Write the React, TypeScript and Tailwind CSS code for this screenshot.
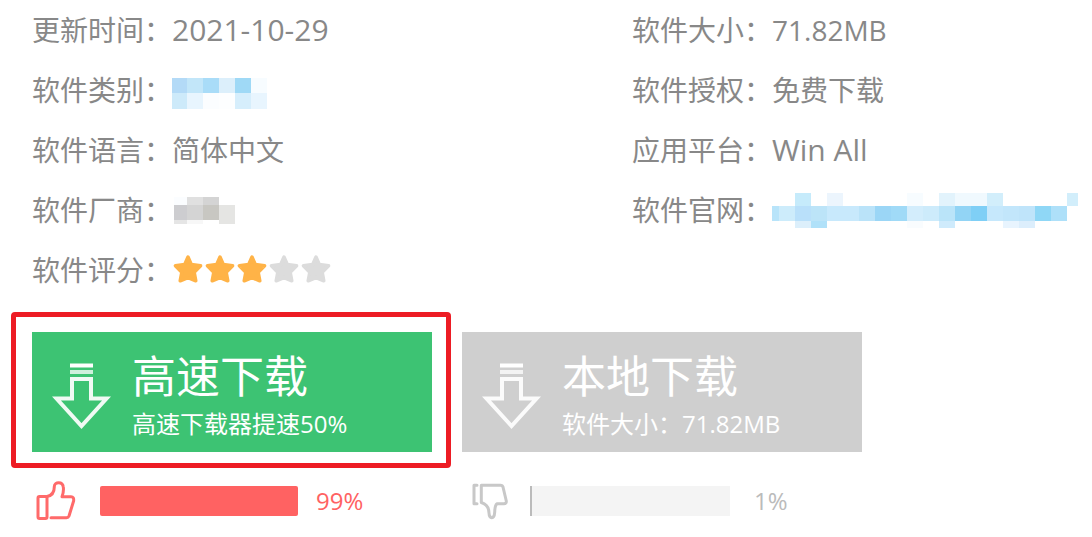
import type { ReactNode } from "react";

// x, y, width, height, fill
type Cell = [number, number, number, number, string];

const categoryCells: Cell[] = [
  [0, 0, 15, 15, "#b3daf7"],
  [15, 0, 16, 15, "#c2e6f9"],
  [31, 0, 16, 15, "#a9dcf8"],
  [47, 0, 16, 15, "#dceffb"],
  [63, 0, 16, 15, "#9fd9f6"],
  [79, 0, 16, 15, "#f7fcff"],
  [0, 15, 15, 16, "#cdeafa"],
  [15, 15, 16, 16, "#e8f5fe"],
  [31, 15, 16, 16, "#fbfdff"],
  [47, 15, 16, 16, "#fdfeff"],
  [63, 15, 16, 16, "#d6eefc"],
  [79, 15, 16, 16, "#e8f5fe"],
];

const vendorCells: Cell[] = [
  [2, 0, 13, 8, "#fbfdff"],
  [15, 0, 16, 8, "#e0e0e0"],
  [31, 0, 16, 8, "#d4d4d4"],
  [2, 8, 13, 15, "#cdcdd0"],
  [15, 8, 16, 15, "#d4d4d4"],
  [31, 8, 16, 15, "#c8c7c2"],
  [47, 8, 16, 19, "#e5e5e3"],
  [2, 23, 13, 4, "#e5e5e5"],
  [15, 23, 16, 4, "#f7f7f7"],
];

const siteCells: Cell[] = [
  [23, 0, 16, 13, "#c6ebfb"],
  [55, 0, 16, 13, "#ecf5fd"],
  [135, 0, 16, 13, "#f7fcff"],
  [167, 0, 16, 13, "#e2f3fc"],
  [183, 0, 32, 13, "#f0f9fe"],
  [215, 0, 16, 13, "#d2eefb"],
  [295, 0, 11, 13, "#d2eefb"],
  [0, 13, 7, 15, "#b8e4fa"],
  [7, 13, 16, 15, "#cdecfb"],
  [23, 13, 16, 15, "#b9e0fa"],
  [39, 13, 16, 15, "#bce4f8"],
  [55, 13, 32, 15, "#c8e9fc"],
  [87, 13, 16, 15, "#bae3f9"],
  [103, 13, 16, 15, "#9bd6f6"],
  [119, 13, 16, 15, "#a0daf7"],
  [135, 13, 16, 15, "#d3edfc"],
  [151, 13, 16, 15, "#cdebfb"],
  [167, 13, 16, 15, "#bae4f9"],
  [183, 13, 16, 15, "#92d4f5"],
  [199, 13, 16, 15, "#7fcff6"],
  [215, 13, 16, 15, "#c6e8fc"],
  [231, 13, 16, 15, "#c2e6fb"],
  [247, 13, 16, 15, "#bfe4fa"],
  [263, 13, 16, 15, "#8fd7f6"],
  [279, 13, 16, 15, "#aee0f9"],
  [23, 28, 16, 7, "#dceffb"],
  [39, 28, 16, 7, "#b0e1f9"],
  [135, 28, 16, 7, "#f9fcfe"],
  [167, 28, 16, 7, "#cfebfc"],
  [231, 28, 16, 7, "#e8f4fe"],
  [247, 28, 16, 7, "#dceefc"],
];

const Mosaic = ({
  cells,
  width,
  height,
}: {
  cells: Cell[];
  width: number;
  height: number;
}) => (
  <svg
    width={width}
    height={height}
    viewBox={`0 0 ${width} ${height}`}
    shapeRendering="crispEdges"
    aria-hidden="true"
  >
    {cells.map(([x, y, w, h, fill]) => (
      <rect key={`${x}-${y}`} x={x} y={y} width={w} height={h} fill={fill} />
    ))}
  </svg>
);

const Star = ({ active }: { active: boolean }) => (
  <svg width="32" height="32" viewBox="0 0 32 32" aria-hidden="true">
    <path
      d="M16 3 19.4 10.6 28.6 11.8 22.2 18.2 23.8 26.8 16 23.6 8.2 26.8 9.8 18.2 3.4 11.8 12.6 10.6Z"
      fill={active ? "#ffb347" : "#dcdcdc"}
      stroke={active ? "#ffb347" : "#dcdcdc"}
      strokeWidth="3.5"
      strokeLinejoin="round"
    />
  </svg>
);

const DownloadArrow = () => (
  <svg
    width="60"
    height="70"
    viewBox="0 0 60 70"
    fill="none"
    stroke="#fff"
    className="shrink-0"
    aria-hidden="true"
  >
    <path d="M18 4.5H41" strokeWidth="4" />
    <path d="M18 11H41" strokeWidth="4" strokeOpacity="0.75" />
    <path
      d="M20 18H39V37.5H54.5L29.5 65 4.5 37.5H20Z"
      strokeWidth="4"
      strokeOpacity="0.92"
    />
  </svg>
);

const ThumbUp = () => (
  <svg
    width="40"
    height="40"
    viewBox="0 0 40 40"
    fill="none"
    stroke="#ff6a6a"
    strokeWidth="3"
    strokeLinecap="round"
    strokeLinejoin="round"
    aria-hidden="true"
  >
    <rect x="2" y="15.5" width="9" height="22" rx="1.5" />
    <path d="M15 36.7H30.5Q32.3 36.7 33 35L37.6 20Q38.2 15.7 35 15.7H26Q28 10 27.3 6C26.7 .2 18.5 .6 18.3 5.5C18.4 10.5 16.5 14.5 11 15.5" />
  </svg>
);

const ThumbDown = () => (
  <svg
    width="38"
    height="40"
    viewBox="0 0 38 40"
    fill="none"
    stroke="#c8c8c8"
    strokeWidth="3"
    strokeLinecap="round"
    strokeLinejoin="round"
    aria-hidden="true"
  >
    <path d="M5 4.2H2V22.7H5" />
    <path d="M9.3 4.2H28.5Q30.5 4.2 31 6L34.3 20Q34.5 22.7 32 22.7H25C22.5 24.5 23 28.5 22.6 32C22.2 38.5 17.2 38 17 32C17 26.5 14 23 9.3 21.5Z" />
  </svg>
);

const Row = ({ label, children }: { label: string; children: ReactNode }) => (
  <div className="flex h-15 items-center">
    <dt className="w-35 shrink-0 whitespace-nowrap">{label}：</dt>
    <dd className="flex items-center whitespace-nowrap">{children}</dd>
  </div>
);

const DownloadButton = ({
  title,
  note,
  color,
}: {
  title: string;
  note: string;
  color: string;
}) => (
  <button
    type="button"
    className={`flex h-30 w-100 items-center pt-2 pl-5 text-left text-white ${color}`}
  >
    <DownloadArrow />
    <span className="flex flex-col pl-5 whitespace-nowrap">
      <span className="text-[44px] leading-[56px]">{title}</span>
      <span className="text-2xl leading-10">{note}</span>
    </span>
  </button>
);

const Bar = ({ percent, fill, track }: { percent: number; fill: string; track: string }) => (
  <div className={`h-[30px] w-50 shrink-0 ${track}`}>
    <div className={`h-full ${fill}`} style={{ width: `${percent}%` }}></div>
  </div>
);

const App = () => {
  return (
    <main className="bg-white pl-8 text-[28px] text-[#888] font-['Open_Sans','Noto_Sans_CJK_SC',sans-serif]">
      <div className="grid grid-cols-[30fr_23fr]">
        <dl>
          <Row label="更新时间">
            <span className="text-3xl">2021-10-29</span>
          </Row>
          <Row label="软件类别">
            <a href="#category" aria-label="软件类别" className="pt-1.5">
              <Mosaic cells={categoryCells} width={95} height={31} />
            </a>
          </Row>
          <Row label="软件语言">简体中文</Row>
          <Row label="软件厂商">
            <Mosaic cells={vendorCells} width={63} height={27} />
          </Row>
          <Row label="软件评分">
            {[1, 2, 3, 4, 5].map((n) => (
              <Star key={n} active={n <= 3} />
            ))}
          </Row>
        </dl>
        <dl>
          <Row label="软件大小">71.82MB</Row>
          <Row label="软件授权">免费下载</Row>
          <Row label="应用平台">
            <span className="text-3xl">Win All</span>
          </Row>
          <Row label="软件官网">
            <a href="#site" aria-label="软件官网">
              <Mosaic cells={siteCells} width={306} height={35} />
            </a>
          </Row>
        </dl>
      </div>

      <div className="mt-8 flex gap-[30px]">
        <div className="relative">
          <DownloadButton
            title="高速下载"
            note="高速下载器提速50%"
            color="bg-[#3dc373]"
          />
          <div className="pointer-events-none absolute -top-5 -right-[19px] -bottom-4 -left-[21px] rounded-sm border-5 border-[#ed1c24]"></div>
        </div>
        <DownloadButton
          title="本地下载"
          note="软件大小：71.82MB"
          color="bg-[#cfcfcf]"
        />
      </div>

      <div className="mt-7 flex gap-[30px] text-2xl">
        <div className="flex h-[42px] w-100 items-center">
          <button type="button" aria-label="顶" className="w-17 shrink-0 pl-1">
            <ThumbUp />
          </button>
          <Bar percent={99} fill="rounded-xs bg-[#ff6262]" track="bg-white" />
          <span className="pl-4 text-[#ff6262]">99%</span>
        </div>
        <div className="flex h-[42px] w-100 items-center">
          <button type="button" aria-label="踩" className="w-17 shrink-0 pl-2.5">
            <ThumbDown />
          </button>
          <Bar percent={1} fill="bg-[#bbb]" track="bg-[#f4f4f4]" />
          <span className="pl-6 text-[#bbb]">1%</span>
        </div>
      </div>
    </main>
  );
};

export default App;
